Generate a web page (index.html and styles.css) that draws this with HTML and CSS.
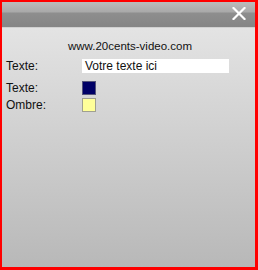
FILE: index.html
```html
<!DOCTYPE html>
<html>
<head>
<meta charset="utf-8">
<link rel="stylesheet" href="styles.css">
</head>
<body>
<div class="frame">
  <div class="header">
    <svg class="close" width="14" height="13" viewBox="0 0 14 13"><path d="M1.5 1 L12.5 12 M12.5 1 L1.5 12" stroke="#fff" stroke-width="2.2" stroke-linecap="square"/></svg>
  </div>
  <div class="body">
    <div class="site">www.20cents-video.com</div>
    <div class="row row-text">
      <span class="label">Texte:</span>
      <div class="input">Votre texte ici</div>
    </div>
    <div class="row row-c1">
      <span class="label">Texte:</span>
      <span class="swatch navy"></span>
    </div>
    <div class="row row-c2">
      <span class="label">Ombre:</span>
      <span class="swatch yellow"></span>
    </div>
  </div>
</div>
</body>
</html>
```
FILE: styles.css
```css
html, body { margin: 0; padding: 0; }
body { width: 258px; height: 270px; overflow: hidden; font-family: "Liberation Sans", Arial, sans-serif; }
.frame {
  box-sizing: border-box;
  width: 258px; height: 270px;
  border-style: solid; border-color: #f00;
  border-width: 2px 3px 3px 2px;
  display: flex; flex-direction: column;
  background: linear-gradient(#e8e8e8, #b8b8b8);
}
.header {
  height: 25px; flex: none;
  background: linear-gradient(#bcbcbc 0, #a9a9a9 10px, #8e8e8e 11px, #858585 100%);
  display: flex; justify-content: flex-end; align-items: center;
  padding-right: 9px;
  border-bottom: 1px solid #d0d0d0;
}
.close { display: block; margin-top: -2px; }
.body { flex: 1; padding: 11px 0 0 4px; font-size: 12px; color: #111; }
.site { text-align: center; font-size: 11.5px; margin-left: -4px; padding-left: 3px; line-height: 14px; }
.row { display: flex; align-items: center; }
.label { width: 76px; flex: none; line-height: 14px; }
.row-text { margin-top: 6px; height: 14px; }
.input { background: #fff; width: 144px; height: 14px; line-height: 14px; padding-left: 3px; }
.row-c1 { margin-top: 8px; height: 14px; }
.row-c2 { margin-top: 3px; height: 14px; }
.swatch { box-sizing: border-box; width: 14px; height: 14px; border: 1px solid #8a8a8a; }
.navy { background: #000066; border-color: #55557a; }
.yellow { background: #ffff99; border-color: #a0a090; }
```
